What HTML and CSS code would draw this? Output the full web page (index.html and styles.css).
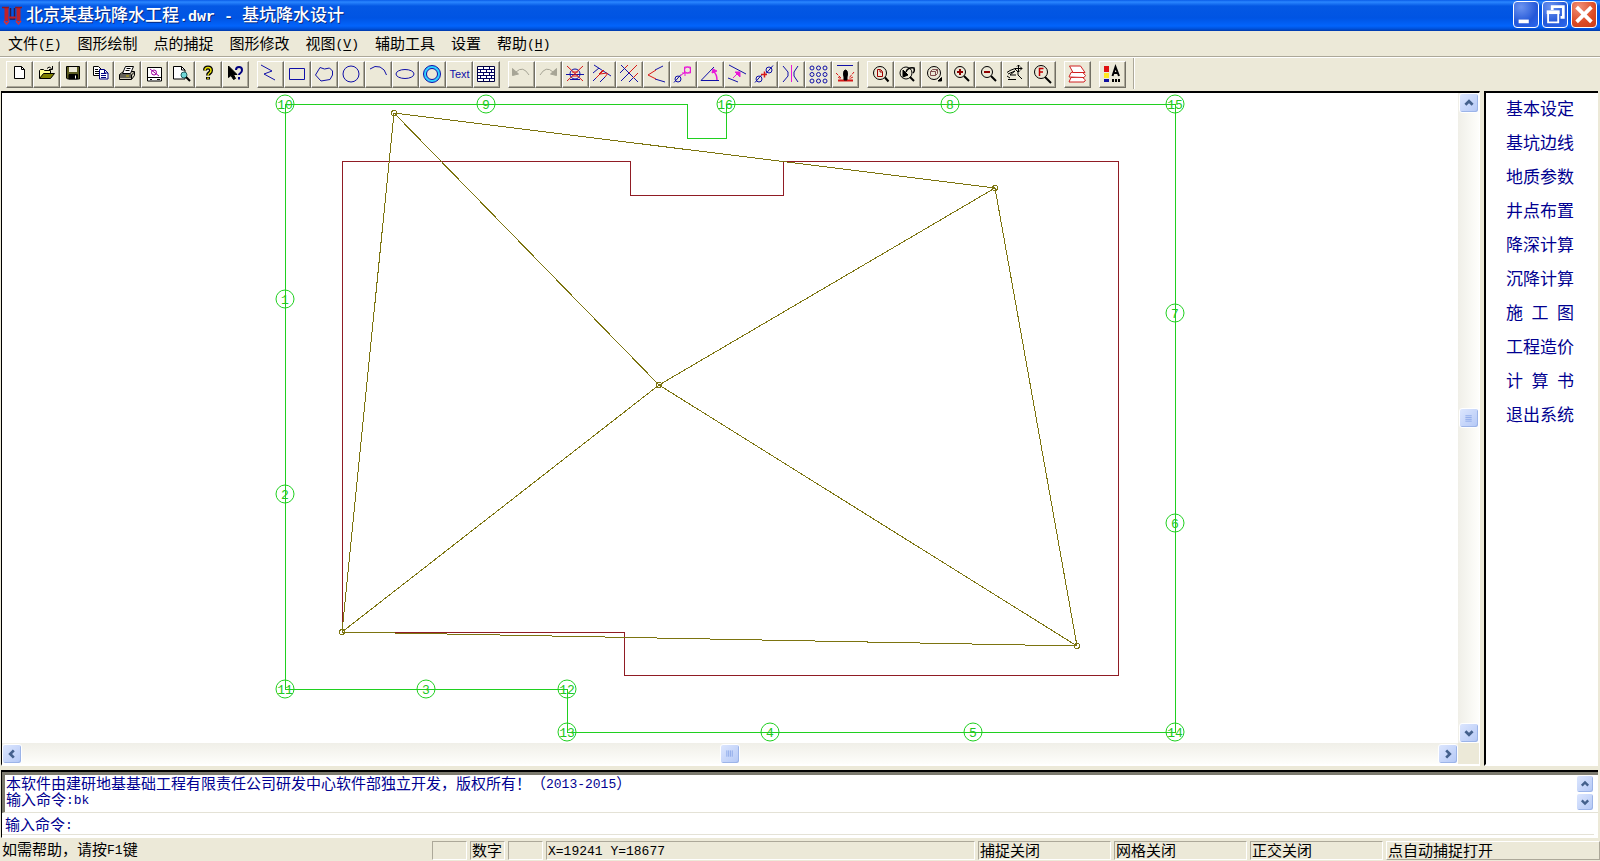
FILE: index.html
```html
<!DOCTYPE html>
<html lang="zh-CN">
<head>
<meta charset="utf-8">
<title>北京某基坑降水工程.dwr - 基坑降水设计</title>
<link rel="stylesheet" href="styles.css">
</head>
<body>
<header class="titlebar">
  <svg class="app-icon" viewBox="0 0 20 20" aria-hidden="true"><path d="M4.500 1v14M16.500 1v14" stroke="#c02028" stroke-width="4"/><path d="M0 1.500h7M13 1.500h7" stroke="#901820" stroke-width="1.500"/><path d="M2 15l2.500 3 2.500-3M14 15l2.500 3 2.500-3" stroke="#d83038" stroke-width="1.500"/><path d="M8.500 2v11h4V2" stroke="#30184a" stroke-width="1.500"/><path d="M7 11.500h7" stroke="#c02028" stroke-width="2"/></svg>
  <h1 class="title">北京某基坑降水工程<span class="title-latin">.dwr - </span>基坑降水设计</h1>
  <div class="window-buttons">
    <button class="wbtn" aria-label="最小化"><svg viewBox="0 0 26 26"><path d="M5 20.500h11" stroke="#fff" stroke-width="4"/></svg></button>
    <button class="wbtn" aria-label="还原"><svg viewBox="0 0 26 26"><path d="M10 8V4.500h12V16h-3" stroke="#fff" stroke-width="3"/><path d="M5.500 10.500h11v11h-11z" stroke="#fff" stroke-width="2"/><path d="M4 10.500h14" stroke="#fff" stroke-width="4"/></svg></button>
    <button class="wbtn wbtn-close" aria-label="关闭"><svg viewBox="0 0 26 26"><path d="M5 5l16 16M21 5L5 21" stroke="#fff" stroke-width="4"/></svg></button>
  </div>
</header>

<nav class="menubar">
  <button>文件<span class="latin">(<u>F</u>)</span></button>
  <button>图形绘制</button>
  <button>点的捕捉</button>
  <button>图形修改</button>
  <button>视图<span class="latin">(<u>V</u>)</span></button>
  <button>辅助工具</button>
  <button>设置</button>
  <button>帮助<span class="latin">(<u>H</u>)</span></button>
</nav>

<div class="toolbar" role="toolbar" aria-label="工具栏">
  <div class="group">
    <button aria-label="新建"><svg viewBox="0 0 27 27"><path d="M8.500 5.500h7l3 3v9h-10z" fill="#fff"/><path d="M15.500 5.500v3h3"/></svg></button>
    <button aria-label="打开"><svg viewBox="0 0 27 27"><path d="M6.500 17V9.500l1-1h3l1 1h6v3" fill="#ffff90"/><path d="M6.500 17.500l4-5h11l-4 5z" fill="#808000"/><path d="M14 7.500q2-3 4.500 0M19.500 5v3.500H16"/></svg></button>
    <button aria-label="保存"><svg viewBox="0 0 27 27"><path d="M6.500 5.500h13v12.500h-12l-1-1z" fill="#5a5a20"/><path d="M9 6h8v5H9z" fill="#ece9d8" stroke="none"/><path d="M9 13.500h8.500V18H9z" fill="#000"/><path d="M15.500 14.500v3" stroke="#fff"/></svg></button>
    <button aria-label="复制"><svg viewBox="0 0 27 27"><path d="M6.500 5.500h5l3 3v6h-8z" fill="#fff"/><path d="M8 8.500h3M8 10.500h4M8 12.500h4"/><path d="M12.500 8.500h5l3.500 3.500v6h-8.500z" fill="#fff" stroke="#000080"/><path d="M14 12.500h5M14 14.500h5M14 16.500h5M17.500 9v3H21" stroke="#000080"/></svg></button>
    <button aria-label="打印"><svg viewBox="0 0 27 27"><path d="M5.500 13.500l4-3h11v4l-3 4h-12z" fill="#c8c4b0"/><path d="M8.500 12.500l3-7h8l-3 7z" fill="#fff"/><path d="M12.500 7.500h4M11.500 9.500h4M5.500 14h12l3-3M6 16h11M17.500 14v4"/><path d="M12 15h3" stroke="#c8b400"/></svg></button>
    <button aria-label="打印区域"><svg viewBox="0 0 27 27"><path d="M6.500 6.500h14v13.500h-14z" fill="#fff"/><path d="M7 16.500h13M9 18.500h2M16 18.500h3"/><circle cx="13" cy="11.500" r="2.500" stroke="#a000a0"/><path d="M9 8l9 7" stroke="#a000a0"/></svg></button>
    <button aria-label="打印预览"><svg viewBox="0 0 27 27"><path d="M5.500 5.500h8l3.500 3.500v9H5.500z" fill="#fff"/><path d="M13.500 5.500V9H17"/><circle cx="16" cy="14" r="3" fill="#70d8d8" stroke="#206060"/><path d="M18 16l4 4" stroke-width="2"/></svg></button>
    <button aria-label="帮助"><svg viewBox="0 0 27 27"><path d="M10 9.500q0-3 3-3t3 3q0 1.500-1.500 2.500T13 14.500" stroke-width="4"/><path d="M13 16v2.500" stroke-width="4"/><path d="M10 9.500q0-3 3-3t3 3q0 1.500-1.500 2.500T13 14.500M13 16.500v1.500" stroke="#e8e000" stroke-width="1.500"/></svg></button>
    <button aria-label="这是什么"><svg viewBox="0 0 27 27"><path d="M6.500 5v11.500l2.500-2 2.500 4 2-1-2-4h3.500z" fill="#000"/><path d="M14 9q0-3 3-3t3 3q0 2-1.500 3T17 14M17 16v2.500" stroke="#000080" stroke-width="2"/></svg></button>
  </div>
  <div class="group blue">
    <button aria-label="折线"><svg viewBox="0 0 27 27"><path d="M4 4l11 6-8 3 11 6"/></svg></button>
    <button aria-label="矩形"><svg viewBox="0 0 27 27"><path d="M5.500 7.500h15v11h-15z"/></svg></button>
    <button aria-label="多边形"><svg viewBox="0 0 27 27"><path d="M9 6.500l4.500 1.500 5-1 3 3v4l-2.500 4.500-9 1.500-5.500-6z"/></svg></button>
    <button aria-label="圆"><svg viewBox="0 0 27 27"><circle cx="13" cy="13" r="8"/></svg></button>
    <button aria-label="圆弧"><svg viewBox="0 0 27 27"><path d="M5 8Q10 4 15 6T21.500 14"/></svg></button>
    <button aria-label="椭圆"><svg viewBox="0 0 27 27"><ellipse cx="13" cy="13" rx="9" ry="4.500"/></svg></button>
    <button aria-label="圆环"><svg viewBox="0 0 27 27"><circle cx="13" cy="13" r="7" stroke="#30d0ff" stroke-width="3"/><circle cx="13" cy="13" r="8.500"/><circle cx="13" cy="13" r="5.500"/></svg></button>
    <button class="text-tool">Text</button>
    <button aria-label="填充"><svg viewBox="0 0 27 27"><path d="M4.500 5.500h17v15h-17z" fill="#fff" stroke="#000040"/><path d="M5 8.500h16M5 11.500h16M5 14.500h16M5 17.500h16M10.500 6v2M16.500 6v2M7.500 9v2M13.500 9v2M18.500 9v2M10.500 12v2M16.500 12v2M7.500 15v2M13.500 15v2M18.500 15v2M10.500 18v2M16.500 18v2" stroke="#000060"/></svg></button>
  </div>
  <div class="group blue">
    <button aria-label="撤销"><svg viewBox="0 0 27 27" class="off"><path d="M4.500 7.500v7l6-1.500z" fill="#a7a596"/><path d="M8 11q7-7 13 3"/></svg></button>
    <button aria-label="重做"><svg viewBox="0 0 27 27" class="off"><path d="M21.500 7.500v7l-6-1.500z" fill="#a7a596"/><path d="M18 11q-7-7-13 3"/></svg></button>
    <button aria-label="删除"><svg viewBox="0 0 27 27"><circle cx="13" cy="13" r="5"/><path d="M4 13.500h18M8 18.500h10"/><path d="M5 5l16 15M21 5L5 20M10 11h6M10 15h6" class="red"/></svg></button>
    <button aria-label="修剪"><svg viewBox="0 0 27 27"><path d="M5 4l17 11M4 12l6-5M4 20l7-7M11 21l5-5"/><path d="M10 13l4-4M11 13l7-1M7 17l8-8M16 16l3-4" class="red"/></svg></button>
    <button aria-label="延伸"><svg viewBox="0 0 27 27"><path d="M5 4l17 17M4 12l5-5M5 20l8-8M13 21l4-4"/><path d="M9 7l3-3M13 12l8-8M17 17l5-5" class="red"/></svg></button>
    <button aria-label="倒角"><svg viewBox="0 0 27 27"><path d="M12 9l8-4M12 18l10 3"/><path d="M13 9l-8 5 8 4" class="red"/></svg></button>
    <button aria-label="复制对象"><svg viewBox="0 0 27 27"><circle cx="8" cy="18" r="3"/><path d="M4 21.500l7-8"/><circle cx="17.500" cy="9" r="3" class="magenta"/><path d="M14.500 6h6v6h-6zM10 15l4-3M12 12h3v3" class="magenta"/></svg></button>
    <button aria-label="旋转"><svg viewBox="0 0 27 27"><path d="M4 19.500h18M4 19.500L17 6"/><path d="M20 19q0-6-4-9" class="magenta" stroke-width="1.500"/><path d="M15 12l1-4 4 2z" class="magenta fill"/></svg></button>
    <button aria-label="偏移"><svg viewBox="0 0 27 27"><path d="M5 4l17 9M4 17l10 4"/><path d="M9 17l6-6M11 11h5v5z" class="magenta fill"/></svg></button>
    <button aria-label="移动"><svg viewBox="0 0 27 27"><circle cx="8" cy="18" r="3"/><path d="M4 21.500l7-8"/><circle cx="18" cy="9" r="3"/><path d="M15 12.500l7-8"/><path d="M10 13.500h6M13.500 10.500v6" class="red" stroke-width="1.500"/></svg></button>
    <button aria-label="镜像"><svg viewBox="0 0 27 27"><path d="M5 5l5 6v4l-5 6M20 5l-4 6v4l4 6"/><path d="M13.500 4v17" class="magenta"/></svg></button>
    <button aria-label="阵列"><svg viewBox="0 0 27 27"><circle cx="7" cy="7" r="2"/><circle cx="13.500" cy="7" r="2"/><circle cx="20" cy="7" r="2"/><circle cx="7" cy="13.500" r="2"/><circle cx="13.500" cy="13.500" r="2"/><circle cx="20" cy="13.500" r="2"/><circle cx="7" cy="20" r="2"/><circle cx="13.500" cy="20" r="2"/><circle cx="20" cy="20" r="2"/></svg></button>
    <button aria-label="炸开"><svg viewBox="0 0 27 27"><path d="M5 4.500h16"/><path d="M6 19.500h15" class="red" stroke-width="2"/><path d="M4 12l5 5M22 11l-5 6M6 16l3 2M21 16l-4 2" class="red" stroke-dasharray="3 1"/><ellipse cx="13.500" cy="13" rx="2" ry="4" stroke="#000" fill="#000"/><path d="M12 16h3v3h-3z" stroke="#000" fill="#000"/></svg></button>
  </div>
  <div class="group">
    <button aria-label="全图显示"><svg viewBox="0 0 27 27"><circle cx="13" cy="12" r="6.500"/><path d="M18 16.500l3.500 4" stroke-width="2"/><path d="M10.500 8.500h3l2 2v5h-5zM13 9v2h2" stroke="#a00000"/></svg></button>
    <button aria-label="前一视图"><svg viewBox="0 0 27 27"><circle cx="12" cy="12" r="6"/><path d="M16 16l4 4" stroke-width="2"/><path d="M9 16V9l5 5z" fill="#000"/><path d="M12 11q2-5 8-4 1 3-1 5" stroke-width="1.500"/></svg></button>
    <button aria-label="窗口放大"><svg viewBox="0 0 27 27"><circle cx="13" cy="12" r="6.500"/><path d="M20.500 16.500v3.500H17z" fill="#000"/><path d="M9.500 10.500h5v4h-5zM9.500 10.500l2-2h5v4l-2 2M14.500 10.500l2-2" stroke="#805050"/></svg></button>
    <button aria-label="放大"><svg viewBox="0 0 27 27"><circle cx="12" cy="11" r="5.500"/><path d="M16 15l5 5" stroke-width="2"/><path d="M9 11h6M12 8v6" stroke="#900000" stroke-width="2"/></svg></button>
    <button aria-label="缩小"><svg viewBox="0 0 27 27"><circle cx="12" cy="11" r="5.500"/><path d="M16 15l5 5" stroke-width="2"/><path d="M9 11h6" stroke="#900000" stroke-width="2"/></svg></button>
    <button aria-label="平移"><svg viewBox="0 0 27 27"><path d="M6 18.500h8M5 15l3 2M5 11.500l3-2 5-2M6 13l7-3-5 4 6 0M13 8l3 3v3l4 4M13 7.500h7M16.500 4v7M15 5.500l1.500-1.500L18 5.500M18.500 6l1.500 1.500L18.500 9M15 9.500l1.500 1.500L18 9.500"/></svg></button>
    <button aria-label="查找"><svg viewBox="0 0 27 27"><circle cx="12" cy="11" r="6.500"/><path d="M16 16l6 6" stroke-width="2"/><path d="M10.500 15V7.500h4M10.500 11h3.500" stroke="#c00000" stroke-width="1.500"/></svg></button>
  </div>
  <div class="group">
    <button aria-label="图层"><svg viewBox="0 0 27 27"><g stroke="#d02020" fill="#fff"><path d="M7 16.500l-2 4.500h15l1.500-2-4-3.500z"/><path d="M7 11.500l-2 4.500 15 .500 1.500-2-4-4.500z"/><path d="M5.500 5h11l4.500 6.500H9z"/></g></svg></button>
  </div>
  <div class="group">
    <button aria-label="颜色与文字"><svg viewBox="0 0 27 27"><path d="M5 5h5v6H5z" fill="#e01010" stroke="none"/><path d="M5 12h5v5H5z" fill="#ffe820" stroke="none"/><path d="M5 18h5v3H5z" fill="#1010a0" stroke="none"/><path d="M13.500 15L16.500 6l3.500 9M14.500 12h4.500" stroke-width="2"/><path d="M13 19.500h2M16 19.500h2M19 19.500h2" stroke-width="3"/></svg></button>
  </div>
  <div class="toolbar-end"></div>
</div>

<main class="workspace">
  <section class="view" aria-label="绘图区">
    <svg class="drawing" viewBox="2 93 1456 650">
      <g class="pit" shape-rendering="crispEdges"><path d="M342.500 161.500h288v34h153v-34h335v514h-494v-43h-282z"/></g>
      <g class="wells" shape-rendering="crispEdges"><path d="M285.500 104.500h402v34h39v-34h449v628h-608v-43h-282z"/></g>
      <g class="survey" shape-rendering="crispEdges">
        <path d="M394 113L995 188L1077 646L342 632L394 113L659 385L995 188M342 632L659 385L1077 646"/>
        <circle cx="394" cy="113" r="2.500"/><circle cx="995" cy="188" r="2.500"/><circle cx="1077" cy="646" r="2.500"/><circle cx="342" cy="632" r="2.500"/><circle cx="659" cy="385" r="2.500"/>
      </g>
      <g class="wells">
        <circle cx="285" cy="104" r="9"/><circle cx="486" cy="104" r="9"/><circle cx="726" cy="104" r="9"/><circle cx="950" cy="104" r="9"/><circle cx="1175" cy="104" r="9"/><circle cx="285" cy="299" r="9"/><circle cx="285" cy="494" r="9"/><circle cx="285" cy="689" r="9"/><circle cx="426" cy="689" r="9"/><circle cx="567" cy="689" r="9"/><circle cx="567" cy="732" r="9"/><circle cx="770" cy="732" r="9"/><circle cx="973" cy="732" r="9"/><circle cx="1175" cy="732" r="9"/><circle cx="1175" cy="523" r="9"/><circle cx="1175" cy="313" r="9"/>
      </g>
      <g class="labels">
        <text x="285" y="109">10</text><text x="486" y="109">9</text><text x="725" y="109">16</text><text x="950" y="109">8</text><text x="1175" y="109">15</text><text x="285" y="304">1</text><text x="285" y="499">2</text><text x="285" y="694">11</text><text x="426" y="694">3</text><text x="567" y="694">12</text><text x="567" y="737">13</text><text x="770" y="737">4</text><text x="973" y="737">5</text><text x="1175" y="737">14</text><text x="1175" y="528">6</text><text x="1175" y="318">7</text>
      </g>
    </svg>
    <div class="scroll scroll-v">
      <button class="sbtn" aria-label="向上"><svg viewBox="0 0 20 20"><path d="M6 12l4-4 4 4"/></svg></button>
      <div class="sbtn thumb"><svg viewBox="0 0 20 20"><path d="M6 7.500h7M6 9.500h7M6 11.500h7M6 13.500h7"/></svg></div>
      <button class="sbtn" aria-label="向下"><svg viewBox="0 0 20 20"><path d="M6 8l4 4 4-4"/></svg></button>
    </div>
    <div class="scroll scroll-h">
      <button class="sbtn" aria-label="向左"><svg viewBox="0 0 20 20"><path d="M12 6l-4 4 4 4"/></svg></button>
      <div class="sbtn thumb"><svg viewBox="0 0 20 20"><path d="M6.500 6v7M8.500 6v7M10.500 6v7M12.500 6v7"/></svg></div>
      <button class="sbtn" aria-label="向右"><svg viewBox="0 0 20 20"><path d="M8 6l4 4-4 4"/></svg></button>
    </div>
  </section>
  <aside class="steps">
    <button>基本设定</button>
    <button>基坑边线</button>
    <button>地质参数</button>
    <button>井点布置</button>
    <button>降深计算</button>
    <button>沉降计算</button>
    <button>施 工 图</button>
    <button>工程造价</button>
    <button>计 算 书</button>
    <button>退出系统</button>
  </aside>
</main>

<section class="console">
  <div class="log">
    <div class="log-text">
      <p>本软件由建研地基基础工程有限责任公司研发中心软件部独立开发，版权所有！（<span class="latin">2013-2015</span>）</p>
      <p>输入命令<span class="latin">:bk</span></p>
    </div>
    <div class="log-scroll">
      <button class="sbtn" aria-label="向上"><svg viewBox="0 0 20 20"><path d="M6 12l4-4 4 4"/></svg></button>
      <button class="sbtn" aria-label="向下"><svg viewBox="0 0 20 20"><path d="M6 8l4 4 4-4"/></svg></button>
    </div>
  </div>
  <div class="prompt">
    <label for="cmd">输入命令<span class="latin">:</span></label>
    <input id="cmd" type="text">
  </div>
</section>

<footer class="status">
  <span class="hint">如需帮助，请按<span class="latin">F1</span>键</span>
  <span class="cell key"></span>
  <span class="cell key">数字</span>
  <span class="cell key"></span>
  <span class="cell coords"><span class="latin">X=19241 Y=18677</span></span>
  <span class="cell mode">捕捉关闭</span>
  <span class="cell mode">网格关闭</span>
  <span class="cell mode">正交关闭</span>
  <span class="cell snap">点自动捕捉打开</span>
</footer>
</body>
</html>
```
FILE: styles.css
```css
* { box-sizing: border-box; }

body {
  margin: 0;
  height: 100vh;
  display: flex;
  flex-direction: column;
  overflow: hidden;
  background: #ece9d8;
  color: #000;
  font: 15px/16px "Noto Sans CJK SC", sans-serif;
}

button {
  margin: 0;
  padding: 0;
  border: 0;
  background: none;
  color: inherit;
  font: inherit;
}

svg { display: block; fill: none; }

.latin { font-family: "Liberation Mono", monospace; font-size: 13px; line-height: 0; vertical-align: 1px; }

/* Title bar */
.titlebar {
  display: flex;
  align-items: center;
  flex: none;
  height: 31px;
  padding: 0 2px;
  background: linear-gradient(#0a5ce8 0, #2a86ff 2px, #0458e4 6px, #0054e3 18px, #0264fc 26px, #0050d8 29px, #0038a8 31px);
}
.app-icon { width: 20px; height: 20px; }
.title {
  flex: 1;
  margin: 0 0 0 4px;
  color: #fff;
  font-size: 17px;
  font-weight: 500;
  line-height: 24px;
  text-shadow: 1px 1px 0 #0a2a80;
  white-space: pre;
}
.title-latin { font-family: "Liberation Mono", monospace; font-size: 15px; font-weight: 700; }
.window-buttons { display: flex; gap: 3px; padding: 0 1px 2px 0; }
.wbtn {
  width: 26px;
  height: 27px;
  border: 1px solid #fff;
  border-radius: 4px;
  background: radial-gradient(circle at 30% 20%, #6c94f0, #2458d8 60%, #2a68f0);
}
.wbtn-close { background: radial-gradient(circle at 30% 20%, #f09078, #dc4a24 60%, #c83c18); }
.wbtn svg { width: 24px; height: 25px; }

/* Menu bar */
.menubar {
  display: flex;
  flex: none;
  height: 26px;
  border-bottom: 1px solid #aca899;
}
.menubar button { padding: 0 8px 2px; line-height: 22px; }
.menubar u { text-underline-offset: 2px; }

/* Toolbar */
.toolbar {
  display: flex;
  flex: none;
  gap: 8px;
  height: 34px;
  padding: 3px 6px 0;
  border-top: 1px solid #fff;
}
.group { display: flex; }
.group button {
  width: 27px;
  height: 27px;
  border: 1px solid;
  border-color: #fff #716f64 #716f64 #fff;
  box-shadow: inset -1px -1px 0 #aca899;
}
.group svg { width: 27px; height: 27px; margin: -1px; stroke: #000; }
.blue svg { stroke: #1010a8; }
.group .off { stroke: #a7a596; }
.red { stroke: #d81818; }
.magenta { stroke: #e818d8; }
.fill { fill: #e818d8; }
.text-tool { color: #1010a8; font: 11px/23px "Liberation Sans Narrow", "Liberation Sans", sans-serif; text-align: center; }
.toolbar-end { width: 2px; height: 31px; margin: -3px 0 0 -1px; border-left: 1px solid #aca899; border-right: 1px solid #fff; }

/* Drawing view and side list */
.workspace {
  display: flex;
  flex: 1;
  gap: 4px;
  min-height: 0;
  padding: 0 2px 0 1px;
}
.view {
  display: grid;
  flex: 1;
  grid-template-columns: 1fr 21px;
  grid-template-rows: 1fr 21px;
  min-width: 0;
  border-top: 2px solid #000;
  border-left: 1px solid #000;
  border-right: 1px solid #fff;
  border-bottom: 2px solid #fff;
}
.drawing { width: 100%; height: 100%; min-height: 0; background: #fff; }
.pit { stroke: #901c24; }
.wells { stroke: #20d020; }
.survey { stroke: #7c7410; }
.labels {
  fill: #20c820;
  font: 13px "Liberation Mono", monospace;
  text-anchor: middle;
}

.scroll { display: flex; justify-content: space-between; }
.scroll-v { flex-direction: column; padding: 0 0 0 1px; background: linear-gradient(90deg, #f0efe8, #fefefb); }
.scroll-h { padding: 1px 0 0; background: linear-gradient(#f0efe8, #fefefb); }
.sbtn {
  flex: none;
  width: 20px;
  height: 20px;
  border: 1px solid #fff;
  border-radius: 3px;
  background: linear-gradient(135deg, #dce6fe, #b4c8f6);
  box-shadow: inset -1px -1px 0 #9cb4e8;
}
.sbtn svg { width: 18px; height: 18px; stroke: #44608c; stroke-width: 3; }
.thumb svg { stroke: #8ca8e8; stroke-width: 1; }

.steps {
  display: flex;
  flex-direction: column;
  align-items: flex-start;
  flex: none;
  width: 114px;
  padding: 0 0 0 20px;
  border-top: 2px solid #000;
  border-left: 2px solid #000;
  border-bottom: 2px solid #fff;
  background: #fff;
  color: #000090;
  font-size: 17px;
}
.steps button { width: 68px; height: 34px; padding-bottom: 4px; text-align: justify; text-align-last: justify; white-space: nowrap; }

/* Command console */
.console {
  flex: none;
  margin: 4px 2px 0 1px;
  padding: 0 4px 2px 0;
  border-style: solid;
  border-width: 2px 0 1px 1px;
  border-color: #000 #fff #fff #000;
  background: #fff;
  color: #000090;
}
.log {
  display: flex;
  height: 41px;
  margin-right: -4px;
  padding-right: 4px;
  border-top: 3px solid #7c7a6e;
  border-left: 3px solid #7c7a6e;
  border-bottom: 1px solid #e4e2d6;
}
.log-text { flex: 1; padding-left: 1px; }
.log-text p { margin: 0; line-height: 16px; white-space: nowrap; }
.log-scroll { display: flex; flex-direction: column; }
.log-scroll .sbtn { width: 18px; height: 18px; }
.log-scroll svg { width: 16px; height: 16px; }
.prompt { display: flex; align-items: center; height: 22px; padding-left: 3px; border-bottom: 1px solid #e4e2d6; }
.prompt input { flex: 1; border: 0; outline: 0; background: none; color: inherit; font: inherit; }

/* Status bar */
.status {
  display: flex;
  flex: none;
  gap: 3px;
  height: 23px;
  padding: 3px 0 1px;
  line-height: 16px;
  white-space: nowrap;
}
.hint { flex: 430 1 0; padding-left: 2px; }
.cell { padding-left: 1px; border: 1px solid; border-color: #aca899 #fff #fff #aca899; }
.key { width: 35px; }
.coords { flex: 429 1 0; }
.mode { width: 133px; }
.snap { width: 214px; border-color: #fff #aca899 #aca899 #fff; }
```
